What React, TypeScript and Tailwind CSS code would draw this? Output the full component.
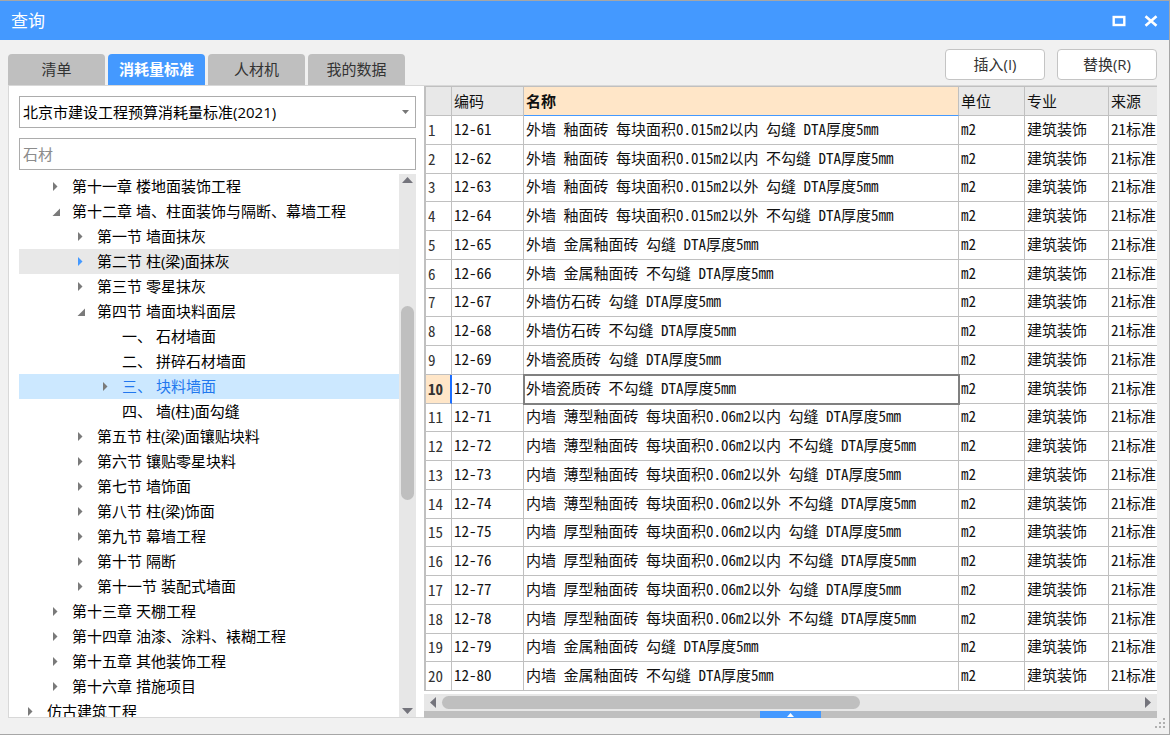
import { useState } from "react";
import clsx from "clsx";

type NodeState = "open" | "closed" | "leaf";

type TreeItem = {
  label: string;
  level: 0 | 1 | 2 | 3;
  state: NodeState;
  hovered?: boolean;
};

const tabs = ["清单", "消耗量标准", "人材机", "我的数据"];

const treeItems: TreeItem[] = [
  { label: "第十一章 楼地面装饰工程", level: 1, state: "closed" },
  { label: "第十二章 墙、柱面装饰与隔断、幕墙工程", level: 1, state: "open" },
  { label: "第一节 墙面抹灰", level: 2, state: "closed" },
  { label: "第二节 柱(梁)面抹灰", level: 2, state: "closed", hovered: true },
  { label: "第三节 零星抹灰", level: 2, state: "closed" },
  { label: "第四节 墙面块料面层", level: 2, state: "open" },
  { label: "一、 石材墙面", level: 3, state: "leaf" },
  { label: "二、 拼碎石材墙面", level: 3, state: "leaf" },
  { label: "三、 块料墙面", level: 3, state: "closed" },
  { label: "四、 墙(柱)面勾缝", level: 3, state: "leaf" },
  { label: "第五节 柱(梁)面镶贴块料", level: 2, state: "closed" },
  { label: "第六节 镶贴零星块料", level: 2, state: "closed" },
  { label: "第七节 墙饰面", level: 2, state: "closed" },
  { label: "第八节 柱(梁)饰面", level: 2, state: "closed" },
  { label: "第九节 幕墙工程", level: 2, state: "closed" },
  { label: "第十节 隔断", level: 2, state: "closed" },
  { label: "第十一节 装配式墙面", level: 2, state: "closed" },
  { label: "第十三章 天棚工程", level: 1, state: "closed" },
  { label: "第十四章 油漆、涂料、裱糊工程", level: 1, state: "closed" },
  { label: "第十五章 其他装饰工程", level: 1, state: "closed" },
  { label: "第十六章 措施项目", level: 1, state: "closed" },
  { label: "仿古建筑工程", level: 0, state: "closed" },
];

const indents = ["pl-[5px]", "pl-[30px]", "pl-[55px]", "pl-[80px]"];

const rows = [
  { code: "12-61", name: "外墙 釉面砖 每块面积0.015m2以内 勾缝 DTA厚度5mm" },
  { code: "12-62", name: "外墙 釉面砖 每块面积0.015m2以内 不勾缝 DTA厚度5mm" },
  { code: "12-63", name: "外墙 釉面砖 每块面积0.015m2以外 勾缝 DTA厚度5mm" },
  { code: "12-64", name: "外墙 釉面砖 每块面积0.015m2以外 不勾缝 DTA厚度5mm" },
  { code: "12-65", name: "外墙 金属釉面砖 勾缝 DTA厚度5mm" },
  { code: "12-66", name: "外墙 金属釉面砖 不勾缝 DTA厚度5mm" },
  { code: "12-67", name: "外墙仿石砖 勾缝 DTA厚度5mm" },
  { code: "12-68", name: "外墙仿石砖 不勾缝 DTA厚度5mm" },
  { code: "12-69", name: "外墙瓷质砖 勾缝 DTA厚度5mm" },
  { code: "12-70", name: "外墙瓷质砖 不勾缝 DTA厚度5mm" },
  { code: "12-71", name: "内墙 薄型釉面砖 每块面积0.06m2以内 勾缝 DTA厚度5mm" },
  { code: "12-72", name: "内墙 薄型釉面砖 每块面积0.06m2以内 不勾缝 DTA厚度5mm" },
  { code: "12-73", name: "内墙 薄型釉面砖 每块面积0.06m2以外 勾缝 DTA厚度5mm" },
  { code: "12-74", name: "内墙 薄型釉面砖 每块面积0.06m2以外 不勾缝 DTA厚度5mm" },
  { code: "12-75", name: "内墙 厚型釉面砖 每块面积0.06m2以内 勾缝 DTA厚度5mm" },
  { code: "12-76", name: "内墙 厚型釉面砖 每块面积0.06m2以内 不勾缝 DTA厚度5mm" },
  { code: "12-77", name: "内墙 厚型釉面砖 每块面积0.06m2以外 勾缝 DTA厚度5mm" },
  { code: "12-78", name: "内墙 厚型釉面砖 每块面积0.06m2以外 不勾缝 DTA厚度5mm" },
  { code: "12-79", name: "内墙 金属釉面砖 勾缝 DTA厚度5mm" },
  { code: "12-80", name: "内墙 金属釉面砖 不勾缝 DTA厚度5mm" },
];

function TitleBar() {
  return (
    <header className="flex h-[39px] shrink-0 items-center bg-[#4499ff] pr-2 pl-[11px] text-white">
      <h1 className="flex-1 text-[17px] leading-6">查询</h1>
      <div className="flex gap-3">
        <button type="button" aria-label="最大化" className="flex size-5 items-center justify-center">
          <svg width="14" height="12" viewBox="0 0 14 12" fill="none" stroke="currentColor" strokeWidth="2.4">
            <rect x="1.7" y="2" width="10.6" height="8" />
          </svg>
        </button>
        <button type="button" aria-label="关闭" className="flex size-5 items-center justify-center">
          <svg width="14" height="12" viewBox="0 0 14 12" stroke="currentColor" strokeWidth="2.6">
            <path d="M1.5 1.2 12.5 10.8M12.5 1.2 1.5 10.8" />
          </svg>
        </button>
      </div>
    </header>
  );
}

function Toolbar() {
  const [active, setActive] = useState(1);

  return (
    <div className="flex h-[45px] shrink-0 items-end justify-between pr-3 pl-2">
      <div role="tablist" className="flex gap-[3px]">
        {tabs.map((tab, i) => (
          <button
            key={tab}
            type="button"
            role="tab"
            aria-selected={i === active}
            onClick={() => setActive(i)}
            className={clsx(
              "h-[31px] w-[97px] rounded-t-sm pb-[2px] leading-5",
              i === active ? "bg-[#4499ff] font-bold text-white" : "bg-[#bfbfbf] text-[#333]",
            )}
          >
            {tab}
          </button>
        ))}
      </div>
      <div className="flex gap-3 self-start pt-[9px]">
        {["插入(I)", "替换(R)"].map((label) => (
          <button
            key={label}
            type="button"
            className="h-[31px] w-[100px] rounded-sm border border-[#c4c4c4] bg-white pb-[2px] leading-5 text-[#333]"
          >
            {label}
          </button>
        ))}
      </div>
    </div>
  );
}

function Marker({ state }: { state: NodeState }) {
  return (
    <svg width="12" height="12" viewBox="0 0 12 12" fill="currentColor" className="shrink-0">
      {state === "closed" && <path d="M4 2 8.500 6.500 4 11z" />}
      {state === "open" && <path d="M11 3.500v7.500H3.500z" />}
    </svg>
  );
}

function Sidebar() {
  const [selected, setSelected] = useState(8);

  return (
    <aside className="flex w-[416px] shrink-0 flex-col border-t border-b border-l border-[#d8d8d8] bg-white pt-[10px] pr-2 pl-[10px]">
      <div className="relative mb-[10px]">
        <select
          aria-label="标准"
          className="h-8 w-full appearance-none border border-[#acacac] bg-white px-[3px] leading-5 text-black"
        >
          <option>北京市建设工程预算消耗量标准(2021)</option>
        </select>
        <svg
          width="7"
          height="4"
          viewBox="0 0 7 4"
          fill="#777"
          className="pointer-events-none absolute top-[14px] right-[7px]"
        >
          <path d="M0 0h7L3.5 4z" />
        </svg>
      </div>
      <input
        type="text"
        aria-label="搜索"
        placeholder="石材"
        className="mb-1 h-8 w-full shrink-0 border border-[#acacac] bg-white px-[3px] leading-5 placeholder:text-[#8c8c8c]"
      />
      <div className="flex min-h-0 flex-1">
        <ul role="tree" className="min-w-0 flex-1 overflow-hidden">
          {treeItems.map((item, i) => (
            <li key={item.label} role="treeitem" aria-selected={i === selected}>
              <button
                type="button"
                onClick={() => setSelected(i)}
                className={clsx(
                  "flex h-[25px] w-full items-center gap-[11px] pb-[2px] leading-5 whitespace-pre",
                  indents[item.level],
                  i === selected ? "bg-[#cce8ff] text-[#2277ee]" : "text-black",
                  item.hovered && i !== selected && "bg-[#e8e8e8]",
                )}
              >
                <span className={item.hovered ? "text-[#4499ff]" : "text-[#7a7a7a]"}>
                  <Marker state={item.state} />
                </span>
                {item.label}
              </button>
            </li>
          ))}
        </ul>
        <div className="flex w-[17px] flex-col items-center bg-[#e7e7e7] text-[#74747c]">
          <button type="button" aria-label="向上" className="flex h-3 shrink-0 items-center">
            <svg width="11" height="6" viewBox="0 0 11 6" fill="currentColor">
              <path d="M0 6h11L5.5 0z" />
            </svg>
          </button>
          <div className="grow-[120]" />
          <div className="w-[13px] grow-[194] rounded-full bg-[#bfbfbf]" />
          <div className="grow-[205]" />
          <button type="button" aria-label="向下" className="flex h-3 shrink-0 items-center">
            <svg width="11" height="6" viewBox="0 0 11 6" fill="currentColor">
              <path d="M0 0h11L5.5 6z" />
            </svg>
          </button>
        </div>
      </div>
    </aside>
  );
}

function QuotaTable() {
  const current = 9;
  const cell = "border-r border-b border-[#c0c0c0] px-[2px] pb-[2px]";
  const head = "h-[29px] border-r border-b border-[#c0c0c0] px-[2px] text-left";

  return (
    <table className="h-full w-full table-fixed border-separate border-spacing-0 overflow-hidden leading-5 whitespace-nowrap text-[#111]">
      <colgroup>
        <col className="w-[26px]" />
        <col className="w-[72px]" />
        <col />
        <col className="w-[66px]" />
        <col className="w-[84px]" />
        <col className="w-12" />
      </colgroup>
      <thead className="bg-[#e8e8e8]">
        <tr>
          <th className={head} aria-label="序号" />
          <th className={clsx(head, "font-normal")}>编码</th>
          <th className="h-[29px] border-r border-b border-r-[#c0c0c0] border-b-[#4499ff] bg-[#ffe6c8] px-[2px] text-left font-bold">
            名称
          </th>
          <th className={clsx(head, "font-normal")}>单位</th>
          <th className={clsx(head, "font-normal")}>专业</th>
          <th className={clsx(head, "border-r-0 font-normal")}>来源</th>
        </tr>
      </thead>
      <tbody>
        {rows.map((row, i) => (
          <tr key={row.code}>
            <th
              scope="row"
              className={clsx(
                "border-b border-[#c0c0c0] px-[2px] text-left text-[#333]",
                i === current ? "border-r-2 border-r-[#1a6dff] bg-[#ffe6c8] font-bold" : "border-r font-normal",
              )}
            >
              {i + 1}
            </th>
            <td className={cell}>{row.code}</td>
            <td className={clsx(cell, i === current && "outline-2 -outline-offset-1 outline-[#808080]")}>{row.name}</td>
            <td className={cell}>m2</td>
            <td className={cell}>建筑装饰</td>
            <td className={clsx(cell, "overflow-hidden border-r-0")}>21标准</td>
          </tr>
        ))}
      </tbody>
    </table>
  );
}

function ResultPane() {
  return (
    <main className="flex min-w-0 flex-1 flex-col border-t border-[#d8d8d8] bg-white">
      <div className="mb-[3px] min-h-0 flex-1 border-t border-l-2 border-[#c0c0c0] font-['Noto_Sans_Mono_CJK_SC','Noto_Sans_CJK_SC',monospace]">
        <QuotaTable />
      </div>
      <div className="flex h-[17px] shrink-0 items-center justify-between bg-[#e7e7e7] px-[6px] text-[#74747c]">
        <button type="button" aria-label="向左">
          <svg width="6" height="11" viewBox="0 0 6 11" fill="currentColor">
            <path d="M6 0v11L0 5.5z" />
          </svg>
        </button>
        <div className="mx-[6px] flex-1">
          <div className="h-[13px] w-3/5 rounded-full bg-[#bfbfbf]" />
        </div>
        <button type="button" aria-label="向右">
          <svg width="6" height="11" viewBox="0 0 6 11" fill="currentColor">
            <path d="M0 0v11l6-5.500z" />
          </svg>
        </button>
      </div>
      <div className="flex h-[7px] shrink-0 justify-center bg-[#bfbfbf]">
        <button type="button" aria-label="展开" className="flex w-[61px] items-center justify-center bg-[#4499ff]">
          <svg width="7" height="4" viewBox="0 0 7 4" fill="white">
            <path d="M0 4h7L3.500 0z" />
          </svg>
        </button>
      </div>
    </main>
  );
}

export default function App() {
  return (
    <div className="flex h-screen flex-col overflow-hidden border-t border-r border-b border-[#a6a6a6] bg-[#f1f1f1] font-['Open_Sans','Noto_Sans_CJK_SC',sans-serif] text-[15px]">
      <TitleBar />
      <Toolbar />
      <div className="flex min-h-0 flex-1 pr-3 pl-2">
        <Sidebar />
        <ResultPane />
      </div>
      <footer className="flex h-4 shrink-0 justify-end pr-[3px]">
        <svg width="11" height="11" viewBox="0 0 11 11" fill="#b0b0b0">
          <path d="M8 0h2v2H8zM4 4h2v2H4zM8 4h2v2H8zM0 8h2v2H0zM4 8h2v2H4zM8 8h2v2H8z" />
        </svg>
      </footer>
    </div>
  );
}
